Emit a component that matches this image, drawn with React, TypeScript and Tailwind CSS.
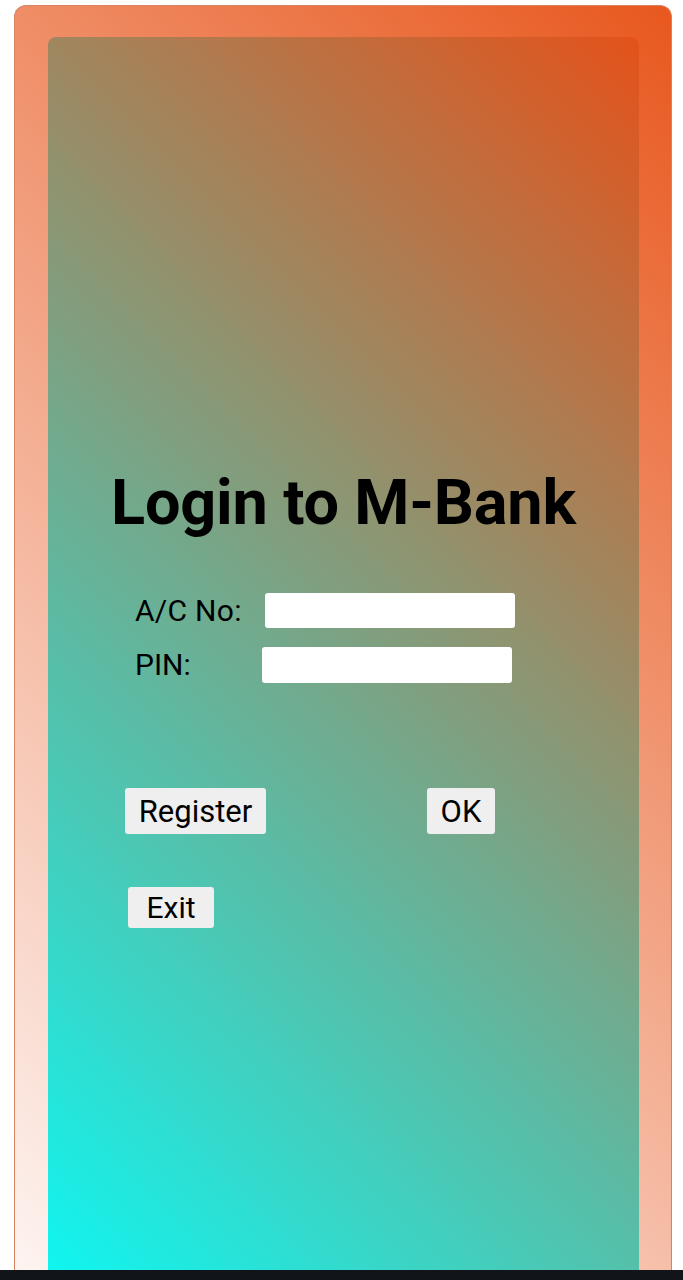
import React from "react";

export default function App() {
  return (
    <div className="w-[683px] h-[1280px] bg-white flex flex-col" style={{ fontFamily: "Roboto, 'Noto Sans', sans-serif" }}>
      <div className="flex-1 pt-[5px] pl-[14px] pr-[11px] flex">
        <div className="flex-1 rounded-t-[12px] border border-[#d9825f] border-b-0 bg-[linear-gradient(45deg,#fdf4f1,#e8581e)] pt-[31px] pl-[33px] pr-[32px] flex">
          <div className="flex-1 rounded-t-[8px] bg-[linear-gradient(45deg,#10f5f0,#e4521a)] flex flex-col">
            <h1 className="mt-[434px] text-center text-[63px] font-bold text-black leading-none tracking-[-0.2px]">Login to M-Bank</h1>
            <div className="mt-[59px] ml-[87px] flex flex-col gap-[19px]">
              <div className="flex items-center">
                <span className="w-[130px] text-[30px] text-black leading-none tracking-[0.3px]">A/C No:</span>
                <div className="w-[250px] h-[35px] bg-white rounded-[3px]" />
              </div>
              <div className="flex items-center">
                <span className="w-[127px] text-[30px] text-black leading-none">PIN:</span>
                <div className="w-[250px] h-[36px] bg-white rounded-[3px]" />
              </div>
            </div>
            <div className="mt-[105px] ml-[77px] flex">
              <button className="w-[141px] h-[46px] bg-[#efefef] rounded-[3px] text-[31px] text-black leading-none">Register</button>
              <button className="ml-[161px] w-[68px] h-[46px] bg-[#efefef] rounded-[3px] text-[31px] text-black leading-none">OK</button>
            </div>
            <div className="mt-[53px] ml-[80px] flex">
              <button className="w-[86px] h-[41px] bg-[#efefef] rounded-[3px] text-[30px] text-black leading-none">Exit</button>
            </div>
          </div>
        </div>
      </div>
      <div className="h-[10px] bg-[#111418]" />
    </div>
  );
}
